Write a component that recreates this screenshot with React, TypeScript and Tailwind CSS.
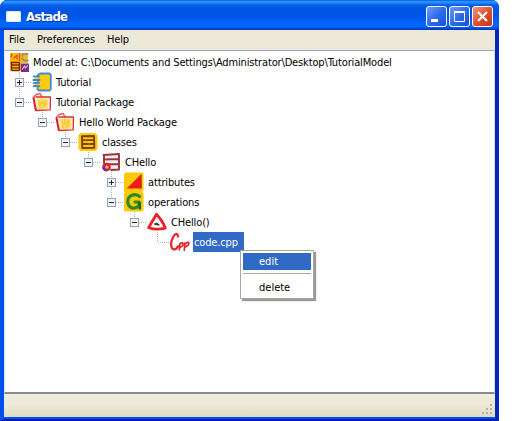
import type { ReactNode } from 'react';

type Toggle = 'plus' | 'minus' | 'leaf';

function Connector({ toggle, up, down }: { toggle: Toggle; up: boolean; down: boolean }) {
  return (
    <svg width="23" height="20" viewBox="0 0 23 20" className="shrink-0" shapeRendering="crispEdges">
      <g stroke="#b4b4b4" strokeDasharray="1 1" fill="none">
        {up && <path d="M9.5 0V10" />}
        {down && <path d="M9.5 10V20" />}
        <path d="M10 10.5H22" />
      </g>
      {toggle !== 'leaf' && (
        <g>
          <rect x="5.5" y="6.5" width="8" height="8" fill="#f2f3f1" stroke="#8fa3bd" />
          <path d="M7 10.5h5" stroke="#202a38" />
          {toggle === 'plus' && <path d="M9.5 8v5" stroke="#202a38" />}
        </g>
      )}
    </svg>
  );
}

function Icon({ children }: { children: ReactNode }) {
  return (
    <svg width="20" height="20" viewBox="0 0 20 20" fill="none" className="-ml-px shrink-0" strokeLinecap="round" strokeLinejoin="round">
      {children}
    </svg>
  );
}

const ModelIcon = () => (
  <Icon>
    <path d="M1 1h18v10H1zM1 10h11v9H1z" fill="#fdb80a" />
    <path d="M10.500 1.500v7M5 6l3-3v4M3 2 2 5" stroke="#d4561c" strokeWidth="1.300" />
    <path d="M2 10.500h8M3 13h7M3 15.800h7M3 18.500h7M2.500 11v7M10.500 11v7" stroke="#7d2418" strokeWidth="1.300" />
    <path d="M14 2h5M13.500 2.500v2M13 6.500l2 2h4" stroke="#6f93a0" strokeWidth="1.500" />
    <path d="M12 11.500h8V20h-8z" fill="#73308f" />
    <path d="m13.500 17 2-3 1 2 2-2.500" stroke="#f3b3b8" strokeWidth="1.200" />
  </Icon>
);

const ComponentIcon = () => (
  <Icon>
    <path d="M6 2.500 8 1.500h9.500l1.300 1.300v14.400l-1.300 1.300H7L5.500 17z" fill="#ffcb10" stroke="#3a8ed6" strokeWidth="1.800" />
    <path d="M2 4.500h5M1.500 8h6M2 11h5M2 14h5" stroke="#2f86d2" strokeWidth="2" />
    <path d="M3.500 6.200H8M3.500 12.500H8" stroke="#ffcb10" strokeWidth="1.600" />
  </Icon>
);

const FolderIcon = () => (
  <Icon>
    <path d="M1.500 5 4 2.500l4-1L10 4.500h8.500v13L4 18.500z" fill="#fff0d4" />
    <path d="m5 7 11-.5V17l-10.500.5z" fill="#ffe27a" />
    <path d="m7 8.500 1 7m2-8-1 5 5-4-3 7 4-4" stroke="#ffc62a" strokeWidth="1.300" />
    <path d="M1.500 5.500 4 2.500l4-1L10 4.500" stroke="#e9606a" strokeWidth="1.400" />
    <path d="M4 5h14.500l-.3 12.800-14 .7" stroke="#d8303a" strokeWidth="1.300" />
    <path d="m1.500 6 2.300 12" stroke="#d8202b" strokeWidth="2" />
  </Icon>
);

const ClassesIcon = () => (
  <Icon>
    <path d="m.5 3 2-2h14.500l2.500 2v14l-2 2h-15l-2-2z" fill="#ffc808" />
    <path d="M4 4.300 16 4l.3 11.800-12 .2zM4 8.200l12-.3M4.200 12h12" stroke="#7c400c" strokeWidth="1.900" />
    <path d="M7 8.200h1M11 12h1" stroke="#c08410" />
  </Icon>
);

const ClassIcon = () => (
  <Icon>
    <path d="M2.500 2.200 18 1.800l.2 16-13 .2L2.800 12z" fill="#fdeeee" />
    <path d="m2.500 3 15.500-1v15.500l-8 .5M3 3v8M3 7.500l15-.5M6 12.300l12-.3" stroke="#94353f" strokeWidth="1.900" />
    <circle cx="5.500" cy="15" r="4.300" fill="#dc1838" />
    <path d="M1.200 15.500a4.400 4.400 0 0 0 5 3.800L5 15z" fill="#4b35dd" />
    <path d="m5 13 3 1.500-1.500 2.500-2.500-1z" fill="#ffb310" />
  </Icon>
);

const AttributesIcon = () => (
  <Icon>
    <path d="m0 2 2-1.500h16l1.500 1v17l-1.500 1.500H1L0 19z" fill="#ffc808" />
    <path d="M2.500 16.500C8 12 12 7 17 2.500l.5 14z" fill="#ed1b16" />
    <path d="M17 3v13" stroke="#b83018" strokeWidth="1.200" />
  </Icon>
);

const OperationsIcon = () => (
  <Icon>
    <path d="m0 1 2-1h16l1.500 1v17.500L18 19.500H1L0 18.500z" fill="#ffc808" />
    <path d="M15.500 4.500C11 1 3.800 3 3.800 9.500c0 6.500 6 8.500 11.200 4.500v-4h-4" stroke="#2b8a26" strokeWidth="3.200" />
    <path d="M15.800 11v5.500" stroke="#176d18" strokeWidth="2.500" />
  </Icon>
);

const OperationIcon = () => (
  <Icon>
    <path d="M9.500 2.200c-2 3.500-5 8-7.800 13.500 4.500 1.700 12 1.600 16.600.5-1.500-5-5-9.700-8.800-14z" fill="#fff" stroke="#ee2028" strokeWidth="2.800" />
    <path d="m7 11.500 3-1 2.500 2v1.200l-5-.7z" fill="#444" />
  </Icon>
);

const CppIcon = () => (
  <Icon>
    <g stroke="#e82830">
      <path d="M8 4.500C7.500 1 5.500 1 3.500 4.500.500 9.500 0 16 3.500 17.300c2.200.5 3.500-1.300 4.500-3" strokeWidth="2.300" />
      <path d="M9.800 11.500 9.300 18M10 12c3-3 5 1 0 3.500M14.800 11l-.5 7.500M15 12c4-4 6 0 .3 3" strokeWidth="1.700" />
    </g>
  </Icon>
);

interface RowProps {
  indent: string;
  toggle: Toggle;
  up?: boolean;
  down?: boolean;
  icon: ReactNode;
  label: string;
  selected?: boolean;
}

function Row({ indent, toggle, up = true, down = false, icon, label, selected }: RowProps) {
  return (
    <div className={`flex h-5 ${indent}`}>
      <Connector toggle={toggle} up={up} down={down} />
      {icon}
      <div className={`ml-[3px] h-[20px] whitespace-nowrap pl-px leading-[21px] ${selected ? 'w-[51px] bg-[#316ac5] text-white' : ''}`}>
        {label}
      </div>
    </div>
  );
}

function CaptionButton({ red, children }: { red?: boolean; children: ReactNode }) {
  return (
    <div className={`flex size-[21px] items-center justify-center rounded-[3px] border border-white ${red ? 'bg-linear-to-br from-[#f0977d] via-[#e0502e] to-[#c9340e]' : 'bg-linear-to-br from-[#6c9cf8] via-[#2e6bea] to-[#1750d4]'}`}>
      <svg width="19" height="19" viewBox="0 0 19 19" fill="none" stroke="#fff" className="shrink-0">
        {children}
      </svg>
    </div>
  );
}

export default function App() {
  return (
    <div className="relative h-[421px] w-[520px] overflow-hidden bg-white font-['DejaVu_Sans_Condensed','DejaVu_Sans',sans-serif] text-[11px] tracking-[-0.145px] text-black [font-stretch:condensed]">
      <div className="flex h-full w-[499px] flex-col rounded-t-[7px] bg-[#0048e8]">
        <header className="flex h-[30px] shrink-0 items-center rounded-t-[7px] bg-[linear-gradient(to_bottom,#0058d8_0,#2d92ff_1.5px,#2386fb_3px,#0560e8_5px,#0054e3_9px,#0055e8_17px,#0068ff_23px,#0064fa_27px,#0040c8_29px,#0038bc_30px)] pl-[6px] pr-[6px]">
          <div className="mt-[2px] h-[11px] w-[15px] rounded-[1px] border border-[#d9eaff] bg-white" />
          <div className="ml-[5px] mt-[4px] flex-1 text-[13px] font-bold leading-4 tracking-[-0.75px] text-white [text-shadow:1px_1px_1px_#073a99]">Astade</div>
          <div className="mt-[3px] flex gap-[2px]">
            <CaptionButton><path d="M4 13.5h7" strokeWidth="3" /></CaptionButton>
            <CaptionButton><path d="M4.5 4.5h10v10h-10z" /><path d="M4 5h11" strokeWidth="2" /></CaptionButton>
            <CaptionButton red><path d="m5 5 9 9M14 5l-9 9" strokeWidth="2.2" /></CaptionButton>
          </div>
        </header>
        <div className="flex min-h-0 flex-1 flex-col border-b-2 border-l-4 border-r-4 border-b-[#0020b0] border-l-[#0050ee] border-r-[#0028b8]">
          <nav className="flex h-[20px] shrink-0 bg-[#ece9d8] pl-[5px] leading-[19px]">
            <span className="w-[28px]">File</span>
            <span className="w-[70px] tracking-normal">Preferences</span>
            <span>Help</span>
          </nav>
          <main className="h-[344px] shrink-0 border-b-2 border-l border-r border-t border-b-[#858d8a] border-l-[#d9e4f0] border-r-[#d8d8d8] border-t-[#9ba5c9] bg-white pt-[1px]">
            <div className="flex h-5 pl-[5px] leading-[21px]">
              <ModelIcon />
              <span className="ml-1 whitespace-nowrap">Model at: C:\Documents and Settings\Administrator\Desktop\TutorialModel</span>
            </div>
            <Row indent="pl-[5px]" toggle="plus" down icon={<ComponentIcon />} label="Tutorial" />
            <Row indent="pl-[5px]" toggle="minus" icon={<FolderIcon />} label="Tutorial Package" />
            <Row indent="pl-[28px]" toggle="minus" icon={<FolderIcon />} label="Hello World Package" />
            <Row indent="pl-[51px]" toggle="minus" icon={<ClassesIcon />} label="classes" />
            <Row indent="pl-[74px]" toggle="minus" icon={<ClassIcon />} label="CHello" />
            <Row indent="pl-[97px]" toggle="plus" down icon={<AttributesIcon />} label="attributes" />
            <Row indent="pl-[97px]" toggle="minus" icon={<OperationsIcon />} label="operations" />
            <Row indent="pl-[120px]" toggle="minus" icon={<OperationIcon />} label="CHello()" />
            <Row indent="pl-[143px]" toggle="leaf" icon={<CppIcon />} label="code.cpp" selected />
          </main>
          <footer className="flex flex-1 items-end justify-end border-b-2 border-b-[#0050f0] bg-linear-to-b from-[#efeddf] via-[#ece9d8] to-[#dfdcc5] pb-[2px] pr-[2px]">
            <svg width="12" height="12" viewBox="0 0 12 12" fill="#b7b39f" shapeRendering="crispEdges">
              <path d="M9 1h2v2H9zM5 5h2v2H5zM9 5h2v2H9zM1 9h2v2H1zM5 9h2v2H5zM9 9h2v2H9z" />
            </svg>
          </footer>
        </div>
      </div>
      <div className="absolute left-[240px] top-[250px] h-[49px] w-[74px] border border-[#aca899] bg-white p-[2px] shadow-[2px_2px_1px_#999]">
        <div className="h-[17px] bg-[#316ac5] pl-[16px] leading-[17px] tracking-normal text-white">edit</div>
        <div className="mt-[3px] border-t border-[#aca899]" />
        <div className="mt-[5px] pl-[16px] leading-[17px] tracking-normal">delete</div>
      </div>
    </div>
  );
}
